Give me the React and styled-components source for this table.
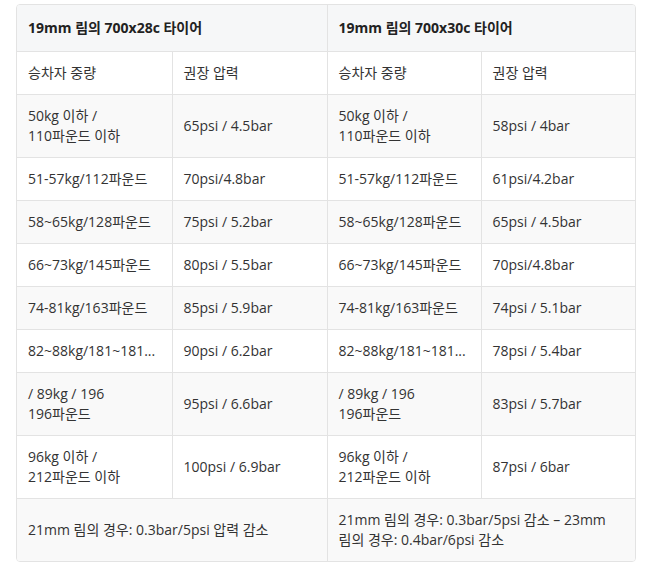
import React from "react";
import styled, { createGlobalStyle } from "styled-components";

const Global = createGlobalStyle`
  html, body { margin: 0; padding: 0; background: #fff; }
  body { font-family: "Open Sans", "Noto Sans CJK KR", sans-serif; }
`;

const Wrap = styled.div`
  width: 618px;
  margin: 4px 0 0 16px;
  border: 1px solid #e3e3e3;
  border-radius: 4px;
  overflow: hidden;
`;

const Table = styled.table`
  width: 100%;
  table-layout: fixed;
  border-collapse: collapse;
  font-size: 14px;
  line-height: 20px;
  color: #333;
  & tr + tr > td { border-top: 1px solid #e3e3e3; }
`;

const Row = styled.tr`
  background: ${(p) => (p.$tone === "head" ? "#f6f7f8" : p.$tone === "alt" ? "#f9f9f9" : "#fff")};
`;

const Cell = styled.td`
  padding: ${(p) => (p.$head ? "13px 12px 13px 11px" : p.$wrap ? "11px 20px 11px 11px" : "11px 12px 11px 11px")};
  font-weight: ${(p) => (p.$head ? 700 : 400)};
  color: ${(p) => (p.$head ? "#222" : "#333")};
  text-align: left;
  vertical-align: middle;
  white-space: ${(p) => (p.$wrap ? "normal" : "nowrap")};
  & + td { border-left: 1px solid #e3e3e3; }
`;

const rows = [
  ["50kg 이하 /\n110파운드 이하", "65psi / 4.5bar", "50kg 이하 /\n110파운드 이하", "58psi / 4bar"],
  ["51-57kg/112파운드", "70psi/4.8bar", "51-57kg/112파운드", "61psi/4.2bar"],
  ["58~65kg/128파운드", "75psi / 5.2bar", "58~65kg/128파운드", "65psi / 4.5bar"],
  ["66~73kg/145파운드", "80psi / 5.5bar", "66~73kg/145파운드", "70psi/4.8bar"],
  ["74-81kg/163파운드", "85psi / 5.9bar", "74-81kg/163파운드", "74psi / 5.1bar"],
  ["82~88kg/181~181...", "90psi / 6.2bar", "82~88kg/181~181...", "78psi / 5.4bar"],
  ["/ 89kg / 196\n196파운드", "95psi / 6.6bar", "/ 89kg / 196\n196파운드", "83psi / 5.7bar"],
  ["96kg 이하 /\n212파운드 이하", "100psi / 6.9bar", "96kg 이하 /\n212파운드 이하", "87psi / 6bar"],
];

const Lines = ({ text }) => {
  const parts = text.split("\n");
  return parts.map((t, i) => (
    <React.Fragment key={i}>
      {t}
      {i < parts.length - 1 && <br />}
    </React.Fragment>
  ));
};

export default function App() {
  return (
    <>
      <Global />
      <Wrap>
        <Table>
          <colgroup>
            <col style={{ width: "155px" }} />
            <col style={{ width: "155px" }} />
            <col style={{ width: "154px" }} />
            <col />
          </colgroup>
          <tbody>
            <Row $tone="head">
              <Cell $head colSpan={2}>19mm 림의 700x28c 타이어</Cell>
              <Cell $head colSpan={2}>19mm 림의 700x30c 타이어</Cell>
            </Row>
            <Row>
              <Cell>승차자 중량</Cell>
              <Cell>권장 압력</Cell>
              <Cell>승차자 중량</Cell>
              <Cell>권장 압력</Cell>
            </Row>
            {rows.map((r, i) => (
              <Row key={i} $tone={i % 2 === 0 ? "alt" : "plain"}>
                {r.map((c, j) => (
                  <Cell key={j}>
                    <Lines text={c} />
                  </Cell>
                ))}
              </Row>
            ))}
            <Row $tone="alt">
              <Cell $wrap colSpan={2}>21mm 림의 경우: 0.3bar/5psi 압력 감소</Cell>
              <Cell $wrap colSpan={2}>21mm 림의 경우: 0.3bar/5psi 감소 – 23mm 림의 경우: 0.4bar/6psi 감소</Cell>
            </Row>
          </tbody>
        </Table>
      </Wrap>
    </>
  );
}
